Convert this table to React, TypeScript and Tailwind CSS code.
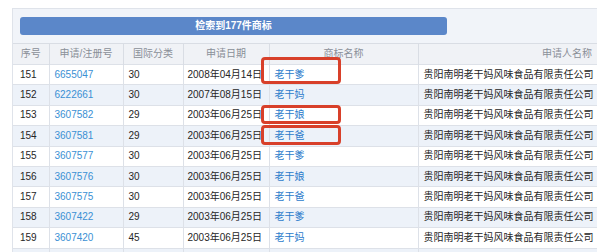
import React from "react";

const rows = [
  ["151", "6655047", "30", "2008年04月14日", "老干爹"],
  ["152", "6222661", "30", "2007年08月15日", "老干妈"],
  ["153", "3607582", "29", "2003年06月25日", "老干娘"],
  ["154", "3607581", "29", "2003年06月25日", "老干爸"],
  ["155", "3607577", "30", "2003年06月25日", "老干爹"],
  ["156", "3607576", "30", "2003年06月25日", "老干娘"],
  ["157", "3607575", "30", "2003年06月25日", "老干爸"],
  ["158", "3607422", "29", "2003年06月25日", "老干爹"],
  ["159", "3607420", "45", "2003年06月25日", "老干妈"],
  ["", "", "", "", ""],
];

const company = "贵阳南明老干妈风味食品有限责任公司";

export default function App() {
  return (
    <div
      className="relative w-[597px] h-[252px] overflow-hidden bg-white pt-2 pl-3"
      style={{ fontFamily: '"Liberation Sans", "Noto Sans CJK SC", sans-serif' }}
    >
      <div className="w-[720px] bg-[#f1f4f9] border-l border-t border-[#dfe3ea]">
        <div className="pt-[8px] pb-[8px] pl-[7px]">
          <div className="w-[427px] h-[18px] rounded-[3px] bg-[#5b87c9] flex items-center justify-center text-white text-[10px] font-bold leading-none">
            检索到177件商标
          </div>
        </div>
        <table className="table-fixed border-collapse text-[10px] leading-none">
          <colgroup>
            <col className="w-[36px]" />
            <col className="w-[74px]" />
            <col className="w-[60px]" />
            <col className="w-[86px]" />
            <col className="w-[149px]" />
            <col className="w-[298px]" />
          </colgroup>
          <thead>
            <tr className="h-[21px] bg-[#f0f2f6] text-[#8a8f98]">
              {["序号", "申请/注册号", "国际分类", "申请日期", "商标名称", "申请人名称"].map((h) => (
                <th
                  key={h}
                  className="font-normal text-center border-t border-r border-[#d9dde4] px-1"
                >
                  {h}
                </th>
              ))}
            </tr>
          </thead>
          <tbody>
            {rows.map((r, i) => (
              <tr
                key={i}
                className={
                  (i % 2 === 0 ? "bg-white" : "bg-[#edf2f9]") + " h-[20.4px] text-[#262626]"
                }
              >
                <td className="border-t border-r border-[#dde1e8] pl-[7px]">{r[0]}</td>
                <td className="border-t border-r border-[#dde1e8] pl-[5px] text-[#3a90d4]">{r[1]}</td>
                <td className="border-t border-r border-[#dde1e8] pl-[5px]">{r[2]}</td>
                <td className="border-t border-r border-[#dde1e8] pl-[4px]">{r[3]}</td>
                <td className="border-t border-r border-[#dde1e8] pl-[5px] text-[#2c7bcb]">{r[4]}</td>
                <td className="border-t border-r border-[#dde1e8] pl-[5px]">{r[1] ? company : ""}</td>
              </tr>
            ))}
          </tbody>
        </table>
      </div>

      <div className="absolute left-[261px] top-[57px] w-[80px] h-[27px] rounded-[4px] border-[3px] border-[#d8402a]" />
      <div className="absolute left-[261px] top-[105px] w-[80px] h-[19px] rounded-[4px] border-[3px] border-[#d8402a]" />
      <div className="absolute left-[261px] top-[125px] w-[80px] h-[20px] rounded-[4px] border-[3px] border-[#d8402a]" />
    </div>
  );
}
